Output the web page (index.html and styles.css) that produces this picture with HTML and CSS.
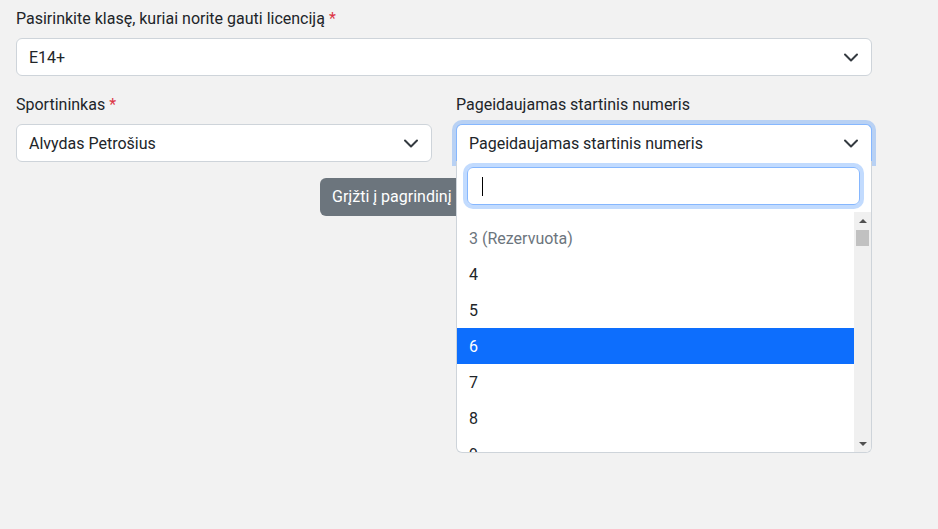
FILE: index.html
```html
<!doctype html>
<html lang="lt">
	<head>
		<meta charset="utf-8">
		<title>Licencija</title>
		<link rel="stylesheet" href="styles.css">
	</head>
	<body>
		<div class="page">
			<div class="field">
				<label class="form-label">Pasirinkite klasę, kuriai norite gauti licenciją <span class="req">*</span></label>
				<div class="form-select">
					<span>E14+</span>
					<svg class="chev" width="16" height="12" viewBox="0 0 16 12"><path d="M2 3.5l6 6 6-6"/></svg>
				</div>
			</div>

			<div class="row">
				<div class="col">
					<label class="form-label">Sportininkas <span class="req">*</span></label>
					<div class="form-select">
						<span>Alvydas Petrošius</span>
						<svg class="chev" width="16" height="12" viewBox="0 0 16 12"><path d="M2 3.5l6 6 6-6"/></svg>
					</div>
				</div>
				<div class="col">
					<label class="form-label">Pageidaujamas startinis numeris</label>
					<div class="select2 open">
						<div class="form-select focused">
							<span>Pageidaujamas startinis numeris</span>
							<svg class="chev" width="16" height="12" viewBox="0 0 16 12"><path d="M2 3.5l6 6 6-6"/></svg>
						</div>
						<!-- atidarytas sąrašas -->
						<div class="dropdown">
							<div class="search">
								<div class="search-field"><span class="caret"></span></div>
							</div>
							<div class="results">
								<ul class="options">
									<li class="opt disabled">3 (Rezervuota)</li>
									<li class="opt">4</li>
									<li class="opt">5</li>
									<li class="opt hl">6</li>
									<li class="opt">7</li>
									<li class="opt">8</li>
									<li class="opt">9</li>
								</ul>
								<div class="scrollbar">
									<span class="sb-up"></span>
									<div class="sb-track"><span class="sb-thumb"></span></div>
									<span class="sb-down"></span>
								</div>
							</div>
						</div>
					</div>
				</div>
			</div>

			<div class="actions">
				<a href="#" class="btn">Grįžti į pagrindinį puslapį</a>
			</div>
		</div>
	</body>
</html>
```

FILE: styles.css
```css
* { box-sizing: border-box; margin: 0; padding: 0; }
html, body { height: 100%; }
body {
	background: #f2f2f2;
	color: #212529;
	font-family: Roboto, "Noto Sans", Arial, sans-serif;
	font-size: 16px;
	line-height: 24px;
}

.page {
	width: 856px;
	margin-left: 16px;
	padding-top: 6px;
}

.form-label {
	display: block;
	margin-bottom: 8px;
	padding-top: 1px;
	height: 24px;
}
.req { color: #dc3545; }

.field { margin-bottom: 16px; }

.form-select {
	display: flex;
	align-items: center;
	justify-content: space-between;
	height: 38px;
	padding: 7px 12px 5px;
	background: #fff;
	border: 1px solid #ced4da;
	border-radius: 6px;
}
.chev { flex: none; margin-top: -2px; }
.chev path {
	fill: none;
	stroke: #343a40;
	stroke-width: 2;
	stroke-linecap: round;
	stroke-linejoin: round;
}

.row {
	display: flex;
	gap: 24px;
}
.col { flex: 1; }

/* select2 atidarytas */
.select2 { position: relative; }
.form-select.focused {
	border-color: #86b7fe;
	box-shadow: 0 0 0 4px rgba(13, 110, 253, .25);
}
.open .form-select.focused {
	border-bottom-color: transparent;
	border-radius: 6px 6px 0 0;
}

.dropdown {
	position: absolute;
	z-index: 10;
	left: 0;
	right: 0;
	top: 37px;
	background: #fff;
	border: 1px solid #ced4da;
	border-top: none;
	border-radius: 0 0 6px 6px;
	overflow: hidden;
}
.search { padding: 6px 11px 7px 10px; }
.search-field {
	height: 38px;
	border: 1px solid #86b7fe;
	border-radius: 6px;
	box-shadow: 0 0 0 4px rgba(13, 110, 253, .25);
	padding: 9px 0 0 14px;
}
.caret {
	display: block;
	width: 1px;
	height: 19px;
	background: #000;
}

.results {
	display: flex;
	height: 240px;
	overflow: hidden;
}
.options {
	flex: 1;
	list-style: none;
	padding-top: 8px;
}
.opt {
	height: 36px;
	padding: 7px 12px 5px;
	line-height: 24px;
}
.opt.disabled { color: #6c757d; }
.opt.hl { background: #0d6efd; color: #fff; }

/* lango slinkties juosta */
.scrollbar {
	width: 17px;
	flex: none;
	display: flex;
	flex-direction: column;
	background: #f0f0f0;
}
.sb-up, .sb-down {
	height: 17px;
	display: flex;
	align-items: center;
	justify-content: center;
}
.sb-up::after, .sb-down::after {
	content: "";
	border-left: 4px solid transparent;
	border-right: 4px solid transparent;
}
.sb-up::after { border-bottom: 4px solid #505050; }
.sb-down::after { border-top: 4px solid #505050; }
.sb-track { flex: 1; padding: 1px 2px; }
.sb-thumb {
	display: block;
	height: 16px;
	background: #c1c1c1;
}

.actions {
	margin-top: 16px;
	padding-left: 304px;
}
.btn {
	display: inline-block;
	height: 38px;
	padding: 7px 12px 5px;
	background: #6c757d;
	color: #fff;
	text-decoration: none;
	border-radius: 6px;
	line-height: 24px;
}
```
